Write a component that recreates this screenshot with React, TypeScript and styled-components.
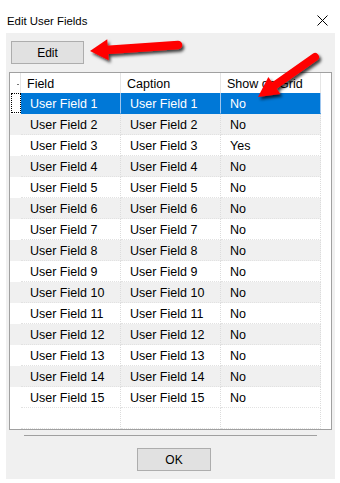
import React from "react";
import styled, { createGlobalStyle } from "styled-components";

interface Field {
  name: string;
  caption: string;
  showOnGrid: boolean;
}

const fields: Field[] = Array.from({ length: 15 }, (_, i) => ({
  name: `User Field ${i + 1}`,
  caption: `User Field ${i + 1}`,
  showOnGrid: i === 2,
}));

const GlobalStyle = createGlobalStyle`
  html, body {
    margin: 0;
    padding: 0;
    background: #fff;
  }
  * {
    box-sizing: border-box;
  }
`;

type Point = [number, number];

function Arrow({ tail, tip, shaft, headLen, headW }: { tail: Point; tip: Point; shaft: number; headLen: number; headW: number }) {
  const dx = tip[0] - tail[0];
  const dy = tip[1] - tail[1];
  const len = Math.hypot(dx, dy);
  const ux = dx / len;
  const uy = dy / len;
  const nx = -uy;
  const ny = ux;
  const bx = tip[0] - ux * headLen;
  const by = tip[1] - uy * headLen;
  const head = [
    [bx + nx * headW / 2, by + ny * headW / 2],
    tip,
    [bx - nx * headW / 2, by - ny * headW / 2],
  ]
    .map((p) => p.join(","))
    .join(" ");

  return (
    <g filter="url(#shadow)">
      <line
        x1={tail[0]}
        y1={tail[1]}
        x2={bx + ux * 2}
        y2={by + uy * 2}
        stroke="#ff0000"
        strokeWidth={shaft}
        strokeLinecap="round"
      />
      <polygon points={head} fill="#ff0000" />
    </g>
  );
}

export default function App() {
  return (
    <>
      <GlobalStyle />
      <Window>
        <TitleBar>
          <Title>Edit User Fields</Title>
          <CloseIcon width="11" height="11" viewBox="0 0 11 11">
            <path d="M0.5 0.5 L10.5 10.5 M10.5 0.5 L0.5 10.5" stroke="#000" strokeWidth="1" />
          </CloseIcon>
        </TitleBar>

        <Client>
          <Button $left={5} $width={73}>Edit</Button>

          <Grid>
            <Row>
              <HeaderCell $corner />
              <HeaderCell>Field</HeaderCell>
              <HeaderCell>Caption</HeaderCell>
              <HeaderCell>Show on Grid</HeaderCell>
              <Filler />
            </Row>
            {fields.map((field, index) => {
              const selected = index === 0;
              const shaded = index % 2 === 1;
              return (
                <Row key={field.name}>
                  <RowHeader $shaded={shaded}>{selected ? <Focus /> : null}</RowHeader>
                  <Cell $shaded={shaded} $selected={selected}>{field.name}</Cell>
                  <Cell $shaded={shaded} $selected={selected}>{field.caption}</Cell>
                  <Cell $shaded={shaded} $selected={selected}>{field.showOnGrid ? "Yes" : "No"}</Cell>
                  <Filler />
                </Row>
              );
            })}
            <Row>
              <RowHeader />
              <Cell />
              <Cell />
              <Cell />
              <Filler />
            </Row>
          </Grid>

          <Separator />

          <Button $left={131} $width={74} $top={12}>OK</Button>
        </Client>

        <Overlay width="340" height="483" viewBox="0 0 340 483">
          <defs>
            <filter id="shadow" x="-20%" y="-40%" width="150%" height="190%">
              <feDropShadow dx="2" dy="2.5" stdDeviation="1.4" floodColor="#000" floodOpacity="0.75" />
            </filter>
          </defs>
          <Arrow tail={[178, 45]} tip={[90, 51]} shaft={8.5} headLen={18} headW={21} />
          <Arrow tail={[315, 57]} tip={[258, 97]} shaft={8} headLen={20} headW={21} />
        </Overlay>
      </Window>
    </>
  );
}

const Window = styled.div`
  position: relative;
  width: 340px;
  height: 483px;
  background: #fff;
  font-family: "Liberation Sans", Arial, sans-serif;
  color: #000;
`;

const TitleBar = styled.div`
  height: 33px;
  display: flex;
  align-items: center;
  justify-content: space-between;
  padding: 0 12px 0 7px;
`;

const Title = styled.span`
  font-size: 11.4px;
  padding-top: 8px;
`;

const CloseIcon = styled.svg`
  margin-top: 7px;
`;

const Client = styled.div`
  margin-left: 6px;
  width: 329px;
  height: 446px;
  background: #f0f0f0;
  display: flex;
  flex-direction: column;
  align-items: flex-start;
  padding-top: 8px;
`;

const Button = styled.div<{ $left: number; $width: number; $top?: number }>`
  margin-left: ${({ $left }) => $left}px;
  margin-top: ${({ $top = 0 }) => $top}px;
  width: ${({ $width }) => $width}px;
  height: 23px;
  padding-top: 1px;
  background: #e1e1e1;
  border: 1px solid #adadad;
  display: flex;
  align-items: center;
  justify-content: center;
  font-size: 12px;
`;

const Grid = styled.div`
  margin: 8px 0 0 3px;
  width: 323px;
  height: 358px;
  border: 1px solid #a0a0a0;
  background: #fff;
  overflow: hidden;
  font-size: 12.5px;
`;

const Row = styled.div`
  display: grid;
  grid-template-columns: 11px 100px 100px 100px 1fr;
  height: 21px;

  &:first-child {
    height: 20px;
  }
`;

const HeaderCell = styled.div<{ $corner?: boolean }>`
  position: relative;
  display: flex;
  align-items: center;
  padding: 2px 0 0 ${({ $corner }) => ($corner ? 0 : 6)}px;
  border-right: 1px solid #e5e5e5;
  white-space: nowrap;

  ${({ $corner }) =>
    $corner
      ? `&::after {
      content: "";
      position: absolute;
      right: 1px;
      top: 11px;
      width: 2px;
      height: 1px;
      background: #777;
    }`
      : ""}
`;

const RowHeader = styled.div<{ $shaded?: boolean }>`
  background: ${({ $shaded }) => ($shaded ? "#f0f0f0" : "#fff")};
  padding: 0 0 1px 1px;
`;

const Focus = styled.div`
  width: 100%;
  height: 100%;
  border: 1px dotted #000;
`;

const Cell = styled.div<{ $shaded?: boolean; $selected?: boolean }>`
  display: flex;
  align-items: center;
  padding: 2px 0 0 9px;
  white-space: nowrap;
  background: ${({ $selected, $shaded }) => ($selected ? "#0078d7" : $shaded ? "#f0f0f0" : "#fff")};
  color: ${({ $selected }) => ($selected ? "#fff" : "#000")};
  border-right: 1px ${({ $selected }) => ($selected ? "solid #9fc6ee" : "dotted #dcdcdc")};
  border-bottom: 1px dotted ${({ $selected }) => ($selected ? "#0078d7" : "#e2e2e2")};
`;

const Filler = styled.div`
  background: #fff;
`;

const Separator = styled.div`
  margin: 5px 0 0 18px;
  width: 293px;
  height: 1px;
  background: #a0a0a0;
`;

const Overlay = styled.svg`
  position: absolute;
  left: 0;
  top: 0;
  pointer-events: none;
`;
